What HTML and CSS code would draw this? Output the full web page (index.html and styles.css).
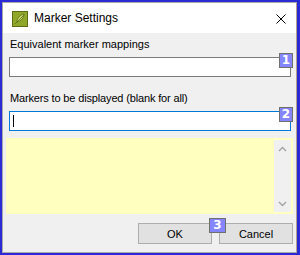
FILE: index.html
```html
<!DOCTYPE html>
<html lang="en">
<head>
    <meta charset="UTF-8">
    <title>Marker Settings</title>
    <link rel="stylesheet" href="styles.css">
</head>
<body>
    <div class="window">
        <div class="titlebar">
            <svg class="app-icon" width="16" height="16" viewBox="0 0 16 16">
                <rect x="0.5" y="0.5" width="15" height="15" fill="#8fa829" stroke="#5d6b16"/>
                <path d="M3 13 L12 4 M5 11 C5 7 8 4 12 3 C12 7 9 10 5 11 Z" fill="#c6d96a" stroke="#5d6b16" stroke-width="0.8"/>
            </svg>
            <span class="title">Marker Settings</span>
            <svg class="close" width="10" height="10" viewBox="0 0 10 10">
                <path d="M0.5 0.5 L9.5 9.5 M9.5 0.5 L0.5 9.5" stroke="#000" stroke-width="1"/>
            </svg>
        </div>

        <div class="content">
            <label class="field-label">Equivalent marker mappings</label>
            <div class="field">
                <input type="text" class="text-input">
                <span class="badge">1</span>
            </div>

            <label class="field-label second">Markers to be displayed (blank for all)</label>
            <div class="field">
                <div class="text-input focused"><span class="caret"></span></div>
                <span class="badge">2</span>
            </div>

            <div class="notes">
                <div class="scrollbar">
                    <svg width="9" height="6" viewBox="0 0 9 6"><path d="M1 5 L4.5 1.5 L8 5" fill="none" stroke="#a3a3a3" stroke-width="1.4"/></svg>
                    <svg width="9" height="6" viewBox="0 0 9 6"><path d="M1 1 L4.5 4.5 L8 1" fill="none" stroke="#a3a3a3" stroke-width="1.4"/></svg>
                </div>
            </div>

            <div class="buttons">
                <button class="btn">OK</button>
                <button class="btn">Cancel</button>
                <span class="badge badge-3">3</span>
            </div>
        </div>
    </div>
</body>
</html>
```

FILE: styles.css
```css
body {
    margin: 0;
    width: 300px;
    height: 255px;
    background-color: #2b2bd6;
    font-family: 'Liberation Sans', Arial, sans-serif;
    overflow: hidden;
}
.window {
    margin: 2px 0 0 2px;
    width: 293px;
    height: 249px;
    border: 1px solid #a9a9a9;
    border-right-color: #b59e8a;
    background-color: #f0f0f0;
    display: flex;
    flex-direction: column;
}
.titlebar {
    height: 30px;
    background-color: #ffffff;
    display: flex;
    align-items: center;
    padding-left: 9px;
}
.app-icon {
    margin-top: 2px;
}
.title {
    margin-left: 6px;
    font-size: 12px;
    color: #000;
}
.close {
    margin-left: auto;
    margin-right: 10px;
    margin-top: 2px;
}
.content {
    padding: 4px 0 0 6px;
    display: flex;
    flex-direction: column;
}
.field-label {
    font-size: 11px;
    color: #000;
    height: 15px;
    line-height: 15px;
    margin-left: 1px;
}
.field-label.second {
    margin-top: 14px;
    letter-spacing: -0.15px;
}
.field {
    position: relative;
    margin-top: 5px;
    width: 282px;
}
.text-input {
    box-sizing: border-box;
    display: block;
    width: 282px;
    height: 20px;
    margin: 0;
    border: 1px solid #7a7a7a;
    background-color: #fff;
    outline: none;
}
.text-input.focused {
    border-color: #0078d7;
    padding: 3px 0 0 3px;
}
.caret {
    display: block;
    width: 1px;
    height: 12px;
    background-color: #000;
}
.badge {
    position: absolute;
    right: -2px;
    top: -4px;
    width: 12px;
    height: 13px;
    border: 1px solid #707070;
    background-color: #8585ff;
    color: #fff;
    font-family: 'DejaVu Sans', sans-serif;
    font-weight: bold;
    font-size: 12px;
    line-height: 13px;
    text-align: center;
}
.notes {
    margin-top: 7px;
    margin-left: -3px;
    width: 287px;
    height: 76px;
    box-sizing: border-box;
    background-color: #ffffc0;
    padding: 2px 2px 2px 0;
    display: flex;
    justify-content: flex-end;
}
.scrollbar {
    width: 17px;
    background-color: #f0f0f0;
    display: flex;
    flex-direction: column;
    justify-content: space-between;
    align-items: center;
    padding: 6px 0 5px;
}
.buttons {
    position: relative;
    display: flex;
    justify-content: flex-end;
    gap: 7px;
    margin-top: 9px;
    width: 284px;
}
.btn {
    width: 74px;
    height: 21px;
    padding: 0;
    border: 1px solid #adadad;
    background-color: #e1e1e1;
    font-family: 'Liberation Sans', Arial, sans-serif;
    font-size: 11px;
    color: #000;
}
.badge-3 {
    right: 67px;
    top: -5px;
    width: 15px;
}
```
